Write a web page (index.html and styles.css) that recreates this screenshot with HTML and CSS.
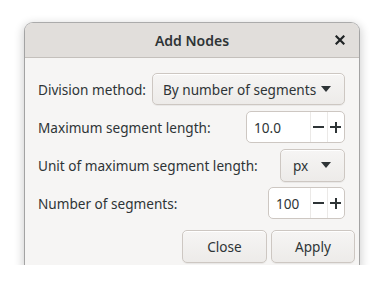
FILE: index.html
```html
<!DOCTYPE html>
<html lang="en">
<head>
    <meta charset="UTF-8">
    <meta name="viewport" content="width=device-width, initial-scale=1.0">
    <title>Add Nodes</title>
    <link rel="stylesheet" href="styles.css">
</head>
<body>
    <div class="dialog">
        <div class="titlebar">
            <span class="title">Add Nodes</span>
            <button class="close-btn" aria-label="Close">
                <svg width="10" height="10" viewBox="0 0 10 10">
                    <path d="M1.5 1.5 L8.5 8.5 M8.5 1.5 L1.5 8.5" stroke="#1f2325" stroke-width="2.2" stroke-linecap="square"/>
                </svg>
            </button>
        </div>

        <div class="content">
            <div class="row">
                <span class="label">Division method:</span>
                <div class="combo combo-wide">
                    <span>By number of segments</span>
                    <span class="arrow"></span>
                </div>
            </div>
            <div class="row">
                <span class="label">Maximum segment length:</span>
                <div class="spin spin-wide">
                    <span class="spin-value">10.0</span>
                    <span class="spin-btn minus"></span>
                    <span class="spin-btn plus"></span>
                </div>
            </div>
            <div class="row">
                <span class="label">Unit of maximum segment length:</span>
                <div class="combo combo-small">
                    <span>px</span>
                    <span class="arrow"></span>
                </div>
            </div>
            <div class="row">
                <span class="label">Number of segments:</span>
                <div class="spin spin-small">
                    <span class="spin-value">100</span>
                    <span class="spin-btn minus"></span>
                    <span class="spin-btn plus"></span>
                </div>
            </div>
        </div>

        <div class="actions">
            <button class="btn btn-close">Close</button>
            <button class="btn btn-apply">Apply</button>
        </div>
    </div>
</body>
</html>
```

FILE: styles.css
```css
body {
    font-family: "Noto Sans", "Open Sans", sans-serif;
    font-size: 13.6px;
    color: #2e3436;
    margin: 0;
    padding: 23px 0 0 25px;
    background: #ffffff;
}
.dialog {
    width: 334px;
    height: 242px;
    background: #f6f5f4;
    border-radius: 8px 8px 0 0;
    box-shadow: 0 0 0 1px rgba(0,0,0,0.28), 0 3px 9px 3px rgba(0,0,0,0.16);
    display: flex;
    flex-direction: column;
}
.titlebar {
    height: 34px;
    background: #e1dedb;
    border-bottom: 1px solid #c4c0bc;
    border-radius: 8px 8px 0 0;
    display: flex;
    align-items: center;
    justify-content: center;
    position: relative;
}
.title {
    font-weight: 600;
    font-size: 14px;
    color: #2e3436;
}
.close-btn {
    position: absolute;
    right: 14px;
    top: 12px;
    width: 10px;
    height: 10px;
    padding: 0;
    border: none;
    background: none;
    display: flex;
}
.content {
    padding: 15px 14px 0 13px;
    display: flex;
    flex-direction: column;
    gap: 6px;
}
.row {
    display: flex;
    align-items: center;
    justify-content: space-between;
    height: 32px;
}
.combo {
    box-sizing: border-box;
    height: 32px;
    border: 1px solid #cdc7c2;
    border-radius: 5px;
    background: linear-gradient(#f6f5f4, #edebe9);
    box-shadow: inset 0 1px #ffffff, 0 1px rgba(0,0,0,0.05);
    display: flex;
    align-items: center;
    justify-content: space-between;
    padding: 0 13px 0 10px;
}
.combo-wide { width: 193px; }
.combo-small {
    width: 65px;
    padding-left: 12px;
    height: 33px;
}
.arrow {
    width: 0;
    height: 0;
    border-left: 5px solid transparent;
    border-right: 5px solid transparent;
    border-top: 6px solid #2e3436;
}
.spin {
    box-sizing: border-box;
    height: 32px;
    border: 1px solid #cdc7c2;
    border-radius: 5px;
    background: #ffffff;
    display: flex;
    align-items: stretch;
}
.spin-wide { width: 99px; }
.spin-small { width: 77px; }
.spin-value {
    flex: 1;
    display: flex;
    align-items: center;
    padding-left: 7px;
}
.spin-btn {
    width: 16px;
    border-left: 1px solid #ebe9e7;
    position: relative;
}
.spin-btn::before {
    content: "";
    position: absolute;
    left: 2px;
    top: 14px;
    width: 11px;
    height: 2px;
    background: #2e3436;
}
.plus::after {
    content: "";
    position: absolute;
    left: 6.5px;
    top: 9.5px;
    width: 2px;
    height: 11px;
    background: #2e3436;
}
.actions {
    margin-top: auto;
    padding: 0 4px 2px 0;
    display: flex;
    justify-content: flex-end;
    gap: 4px;
}
.btn {
    font-family: inherit;
    font-size: 13.6px;
    color: #2e3436;
    height: 33px;
    border: 1px solid #cdc7c2;
    border-radius: 5px;
    background: linear-gradient(#f6f5f4, #edebe9);
    box-shadow: inset 0 1px #ffffff, 0 1px rgba(0,0,0,0.05);
    padding: 0;
}
.btn-close { width: 85px; }
.btn-apply { width: 84px; }
```
